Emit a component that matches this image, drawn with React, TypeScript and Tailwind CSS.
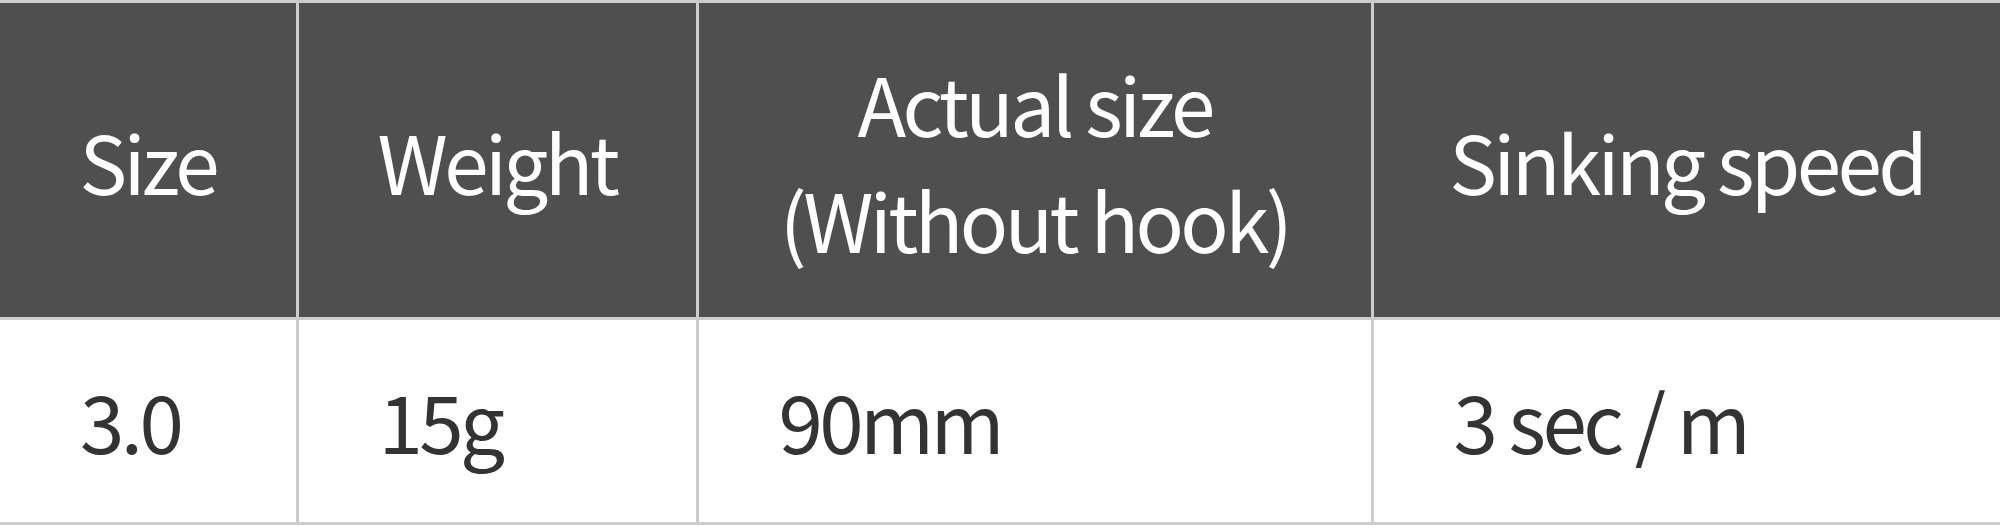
const headers = [
  { label: "Size" },
  { label: "Weight" },
  { label: "Actual size", sub: "(Without hook)" },
  { label: "Sinking speed" },
];

const rows = [["3.0", "15g", "90mm", "3 sec / m"]];

export default function App() {
  return (
    <div
      className="w-[2000px] bg-white"
      style={{ fontFamily: '"Noto Sans CJK JP", "Noto Sans", sans-serif' }}
    >
      <table className="w-full table-fixed border-collapse text-[80px] leading-[1.45] tracking-[-0.045em]">
        <colgroup>
          <col className="w-[297px]" />
          <col className="w-[400px]" />
          <col className="w-[675px]" />
          <col />
        </colgroup>
        <thead>
          <tr className="border-t-[3px] border-[#cccccc]">
            {headers.map((h, i) => (
              <th
                key={h.label}
                className={
                  "bg-[#4f4f4f] py-[41px] text-center align-middle font-normal text-white " +
                  (i > 0 ? "border-l-[3px] border-[#cccccc]" : "")
                }
              >
                {h.label}
                {h.sub ? (
                  <>
                    <br />
                    {h.sub}
                  </>
                ) : null}
              </th>
            ))}
          </tr>
        </thead>
        <tbody>
          {rows.map((r) => (
            <tr key={r[0]} className="border-y-[3px] border-[#cccccc]">
              {r.map((v, i) => (
                <td
                  key={i}
                  className={
                    "pt-[41px] pb-[45px] pl-[80px] text-left align-middle text-[#333333] " +
                    (i > 0 ? "border-l-[3px] border-[#cccccc]" : "")
                  }
                >
                  {v}
                </td>
              ))}
            </tr>
          ))}
        </tbody>
      </table>
    </div>
  );
}
